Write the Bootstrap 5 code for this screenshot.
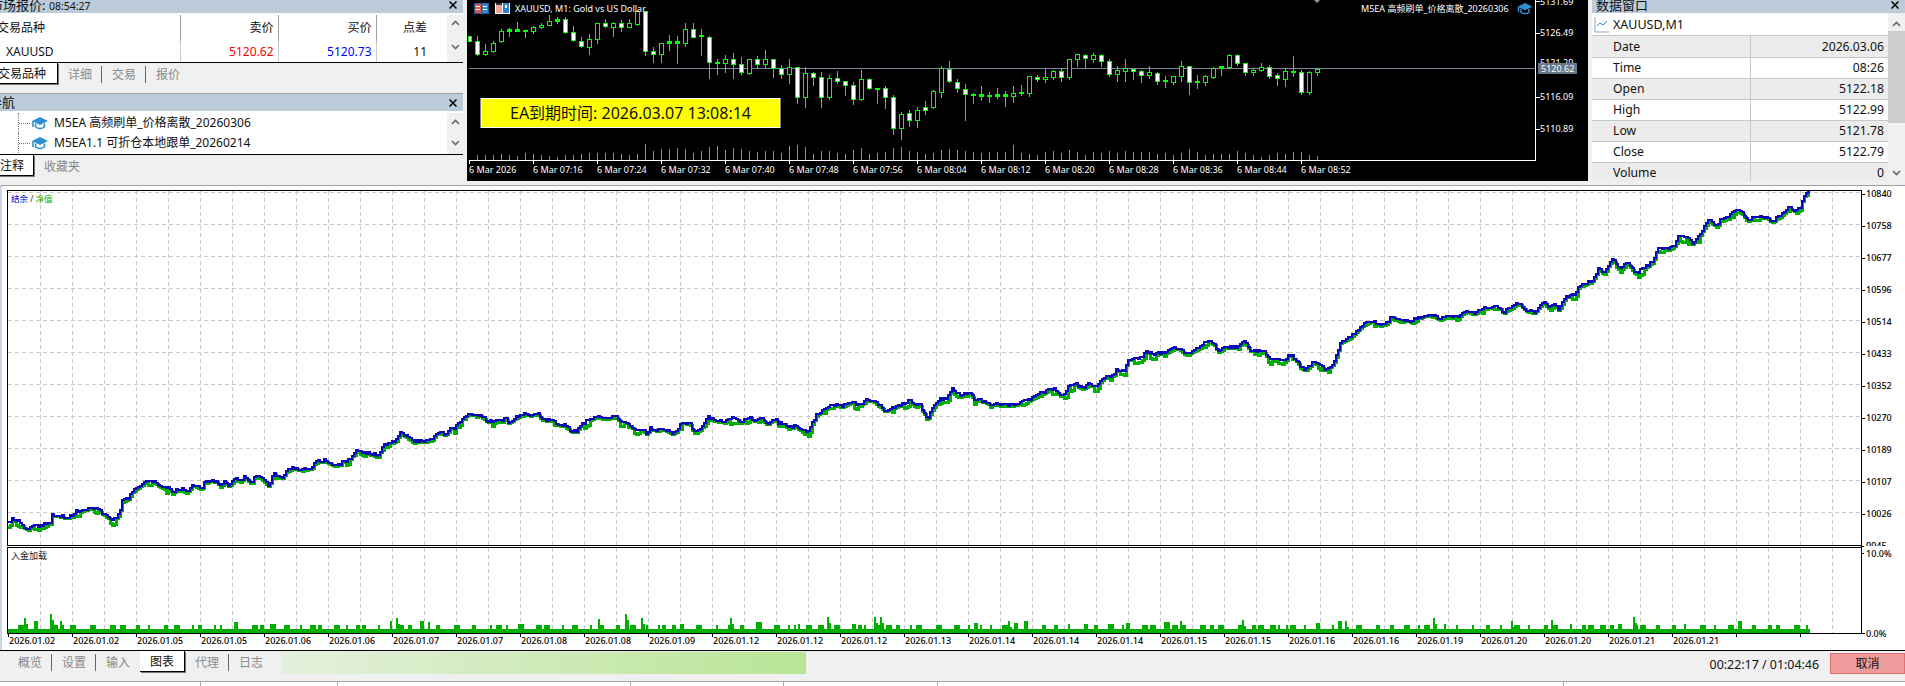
<!DOCTYPE html>
<html lang="zh">
<head>
<meta charset="utf-8">
<title>MT5</title>
<link href="https://cdn.jsdelivr.net/npm/bootstrap@5.3.0/dist/css/bootstrap.min.css" rel="stylesheet">
<style>
html,body{height:686px;overflow:hidden;background:#f0f0f0}
body{font-family:"Noto Sans","Noto Sans CJK SC",sans-serif;font-size:12px;color:#111;width:1905px}
.top-row{height:185px}
.left-pane{width:463px;overflow:hidden}
.chart-pane{width:1121px;height:181px;margin:0 4px}
.chart-pane svg,.tester svg{display:block}
.data-pane{width:313px;overflow:hidden;height:181px}
.titlebar{height:13px;background:#bccbda;font-size:13px;line-height:10px;overflow:hidden;position:relative}
.titlebar.tall{height:17px;line-height:17px}
.titlebar .clip-left{margin-left:-10px;white-space:nowrap}
.titlebar.tall .clip-left{margin-left:-11px}
.titlebar .tm{font-size:10.5px}
.closer{position:absolute;right:6px;top:1px}
.titlebar.tall .closer{top:5px}
.data-title{padding-left:4px}
.data-title .closer{right:6px}
.watch{height:49px;background:#fff;padding-top:2px}
.tree{height:43px;background:#fff;padding-top:2px}
.scroll-col{width:16px;padding:5px 0 4px;background:#f0f0f0}
.scroll-col.nav-scroll{padding:6px 0 4px}
.table.mt-watch{table-layout:fixed;margin:0;width:431px;border-collapse:collapse;font-size:12px;vertical-align:middle}
.table.mt-watch th,.table.mt-watch td{padding:0 4px 0 0;border:0;border-right:1px solid #ccc;border-bottom:0;text-align:right;vertical-align:middle;font-weight:400;color:#111;background:#fff;white-space:nowrap;overflow:hidden}
.table.mt-watch th{height:25px;border-right-color:#a0a0a0}
.table.mt-watch td{height:20px}
.table.mt-watch .namecell{text-align:left;padding-left:0}
.table.mt-watch .sym{padding-left:6px}
.clip-head{margin-left:-3px;display:block}
.col-sell{color:#ff0000!important}
.col-buy{color:#0000ff!important}
.tabstrip{background:#f0f0f0;border-top:1px solid #000;height:31px;flex-wrap:nowrap}
.tabstrip.low{height:30px}
.mt-tab.nav-link{margin-top:3px;height:17px;line-height:17px;padding:0 10px;color:#8a8a8a;font-size:12px;white-space:nowrap}
.mt-tab.nav-link.sep{border-right:1px solid #666;padding-right:9px}
.mt-tab.nav-link.active{margin-top:0;height:21px;line-height:21px;background:#fff;color:#111;border-right:1px solid #000;border-bottom:1px solid #000;box-shadow:1px 1px 0 #777}
.mt-tab.nav-link.cut{margin-left:-12px;padding-right:11px}
.mt-tab.nav-link.cut2{margin-left:-10px;padding-right:9px}
.divider{height:1px;background:#a0a0a0}
.tree-item.list-group-item{padding:0 0 0 18px;border:0;height:20px;background:#fff;font-size:12px;color:#111;white-space:nowrap}
.elbow{width:13px;height:20px;border-left:1px dotted #777;position:relative;flex:none}
.elbow::after{content:"";position:absolute;left:0;right:1px;top:10px;border-top:1px dotted #777}
.capicon{flex:none;margin:0 6px 0 1px}
.table.mt-data{table-layout:fixed;margin:0;width:296px;border-collapse:collapse;font-size:12.2px}
.table.mt-data td{height:21px;padding:0 4px 0 21px;border:0;border-bottom:1px solid #c8c8c8;line-height:19px;vertical-align:middle;color:#111;background:#fff;overflow:hidden}
.table.mt-data tr:nth-child(odd) td{background:#ececec}
.table.mt-data td+td{padding:0 4px 0 0;text-align:right;border-left:1px solid #c8c8c8}
.data-head{height:21px;background:#fff;border-bottom:1px solid #c8c8c8;font-size:12.5px;padding-left:2px;line-height:20px;width:296px}
.data-head svg{margin-right:4px;flex:none}
.data-main{background:#fff;height:168px;overflow:hidden;padding-top:2px}
.data-scroll{width:17px;background:#f0f0f0;height:168px;padding-top:8px;padding-bottom:5px}
.data-thumb{height:92px;background:#cdcdcd;margin:4px 0 auto;width:100%}
.tester{height:465px;background:#fff;border-top:1px solid #a0a0a0;border-left:2px solid #c8d6e6}
.bottom-bar{height:31px;background:#f0f0f0;border-top:1px solid #000;padding-left:3px}
.bottom-bar .nav{padding-left:5px}
.prog-wrap.progress{width:525px;height:22px;margin:1px 0 0 8px;border-radius:0;background:transparent;flex:none}
.prog-fill.progress-bar{background:linear-gradient(90deg,#e4f0dc,#b8e595)}
.elapsed{font-size:12.4px;margin-left:auto;margin-right:11px;margin-top:5px;line-height:17px;white-space:nowrap}
.btn.cancel-btn{width:75px;height:21px;padding:0;margin:2px 0 0;font-size:12px;line-height:18px;background:#ee9b9b;border:1px solid #e26f6f;border-radius:0;color:#111}
.status-row{height:5px;background:#fff;border-top:1px solid #a8a8a8}
.status-cell{border-right:1px solid #a8a8a8;height:4px}
.cv{font-family:"Noto Sans","Noto Sans CJK SC",sans-serif}
.cw{fill:#fff;font-size:9px}
.ck{fill:#000;font-size:9px;font-weight:500}
.cy{fill:#111;font-size:16px}
</style>
</head>
<body>
<svg width="0" height="0" class="position-absolute">
<defs>
<symbol id="cap" viewBox="0 0 16 14"><path fill="#2e8fd0" d="M8 1 16 5 8 9 0 5Z"/><path fill="none" stroke="#2e8fd0" stroke-width="1.6" d="M3.6 7.5V11c2.4 2 6.4 2 8.8 0V7.5M1 5v6"/></symbol>
<symbol id="x" viewBox="0 0 8 8"><path d="M.5.5l7 7M7.5.5l-7 7" stroke="#000" stroke-width="1.5" fill="none"/></symbol>
<symbol id="up" viewBox="0 0 9 6"><path d="M1 5l3.5-3.5L8 5" stroke="#666" stroke-width="1.6" fill="none"/></symbol>
<symbol id="dn" viewBox="0 0 9 6"><path d="M1 1l3.5 3.5L8 1" stroke="#666" stroke-width="1.6" fill="none"/></symbol>
</defs>
</svg>

<div class="top-row d-flex">
  <div class="left-pane">
    <div class="titlebar"><div class="clip-left">市场报价: <span class="tm">08:54:27</span></div><svg class="closer" width="8" height="8"><use href="#x"/></svg></div>
    <div class="watch d-flex">
      <table class="table mt-watch">
        <colgroup><col style="width:180px"><col style="width:98px"><col style="width:98px"><col style="width:55px"></colgroup>
        <tr><th class="namecell"><span class="clip-head">交易品种</span></th><th>卖价</th><th>买价</th><th class="border-0">点差</th></tr>
        <tr><td class="namecell sym">XAUUSD</td><td class="col-sell">5120.62</td><td class="col-buy">5120.73</td><td class="border-0">11</td></tr>
      </table>
      <div class="flex-grow-1 bg-white"></div>
      <div class="scroll-col d-flex flex-column justify-content-between align-items-center"><svg width="9" height="6"><use href="#up"/></svg><svg width="9" height="6" class="mb-2"><use href="#dn"/></svg></div>
    </div>
    <nav class="nav tabstrip">
      <a class="nav-link mt-tab active cut" href="#">交易品种</a>
      <a class="nav-link mt-tab sep" href="#">详细</a>
      <a class="nav-link mt-tab sep" href="#">交易</a>
      <a class="nav-link mt-tab" href="#">报价</a>
    </nav>
    <div class="divider"></div>
    <div class="titlebar tall"><div class="clip-left">导航</div><svg class="closer" width="8" height="8"><use href="#x"/></svg></div>
    <div class="tree d-flex">
      <ul class="list-group list-group-flush flex-grow-1 rounded-0">
        <li class="list-group-item tree-item d-flex align-items-center"><span class="elbow"></span><svg class="capicon" width="16" height="14"><use href="#cap"/></svg>M5EA 高频刷单_价格离散_20260306</li>
        <li class="list-group-item tree-item d-flex align-items-center"><span class="elbow"></span><svg class="capicon" width="16" height="14"><use href="#cap"/></svg>M5EA1.1 可折仓本地跟单_20260214</li>
      </ul>
      <div class="scroll-col nav-scroll d-flex flex-column justify-content-between align-items-center"><svg width="9" height="6"><use href="#up"/></svg><svg width="9" height="6" class="mb-1"><use href="#dn"/></svg></div>
    </div>
    <nav class="nav tabstrip low">
      <a class="nav-link mt-tab active cut2" href="#">注释</a>
      <a class="nav-link mt-tab" href="#">收藏夹</a>
    </nav>
  </div>

  <div class="chart-pane">
    <svg class="cv" width="1121" height="181" viewBox="467 0 1121 181">
      <rect x="467" y="0" width="1121" height="181" fill="#000"/>
      <text class="cw" x="1540" y="66">5121.29</text>
      <g shape-rendering="crispEdges">
        <rect x="469" y="68" width="1066" height="1" fill="#778899"/>
        <g id="vols"></g>
        <g id="candles"></g>
        <rect x="469" y="160" width="1067" height="1" fill="#fff"/>
        <rect x="1535" y="0" width="1" height="161" fill="#fff"/>
        <g id="ticks"></g>
        <rect x="1538" y="63" width="39" height="11" fill="#66778a"/>
        <rect x="474" y="3" width="15" height="11" fill="#1d5f9e"/><rect x="475" y="4" width="6" height="9" fill="#e8503f"/><rect x="482" y="4" width="6" height="9" fill="#2f86cf"/>
        <rect x="476" y="6" width="4" height="1" fill="#fff"/><rect x="476" y="9" width="4" height="1" fill="#fff"/><rect x="483" y="6" width="4" height="1" fill="#fff"/><rect x="483" y="9" width="4" height="1" fill="#fff"/>
        <rect x="495" y="3" width="15" height="11" fill="#fff"/><rect x="496" y="5" width="6" height="8" fill="#f2a79a"/><rect x="496" y="3" width="6" height="2" fill="#333"/><rect x="503" y="3" width="6" height="10" fill="#2f86cf"/><rect x="505" y="5" width="2" height="3" fill="#fff"/>
      </g>
      <path d="M1314 0h6l-3 3z" fill="#8a97a5"/>
      <use href="#cap" x="1517" y="2" width="16" height="13"/>
      <text class="cw" x="515" y="12">XAUUSD, M1:  Gold vs US Dollar</text>
      <text class="cw" x="1361" y="12">M5EA 高频刷单_价格离散_20260306</text>
      <text class="cw" x="1540" y="5">5131.69</text>
      <text class="cw" x="1540" y="36">5126.49</text>
      <text class="cw" x="1541" y="72">5120.62</text>
      <text class="cw" x="1540" y="100">5116.09</text>
      <text class="cw" x="1540" y="132">5110.89</text>
      <text class="cw" x="469" y="173">6 Mar 2026</text>
      <text class="cw" x="533" y="173">6 Mar 07:16</text>
      <text class="cw" x="597" y="173">6 Mar 07:24</text>
      <text class="cw" x="661" y="173">6 Mar 07:32</text>
      <text class="cw" x="725" y="173">6 Mar 07:40</text>
      <text class="cw" x="789" y="173">6 Mar 07:48</text>
      <text class="cw" x="853" y="173">6 Mar 07:56</text>
      <text class="cw" x="917" y="173">6 Mar 08:04</text>
      <text class="cw" x="981" y="173">6 Mar 08:12</text>
      <text class="cw" x="1045" y="173">6 Mar 08:20</text>
      <text class="cw" x="1109" y="173">6 Mar 08:28</text>
      <text class="cw" x="1173" y="173">6 Mar 08:36</text>
      <text class="cw" x="1237" y="173">6 Mar 08:44</text>
      <text class="cw" x="1301" y="173">6 Mar 08:52</text>
      <rect x="481" y="98.5" width="299" height="29" fill="#ff0" stroke="#fff"/>
      <text class="cy" x="630.5" y="119" text-anchor="middle">EA到期时间: 2026.03.07 13:08:14</text>
    </svg>
  </div>

  <div class="data-pane">
    <div class="titlebar data-title">数据窗口<svg class="closer" width="8" height="8"><use href="#x"/></svg></div>
    <div class="d-flex bg-white">
      <div class="data-main">
        <div class="data-head d-flex align-items-center"><svg width="15" height="16" viewBox="0 0 15 16"><path d="M1 .5V15h14" stroke="#9aa5b1" fill="none"/><path d="M3 9l3-3 3 2 4-4" stroke="#2e8fd0" fill="none"/></svg>XAUUSD,M1</div>
        <table class="table mt-data">
          <colgroup><col style="width:158px"><col style="width:138px"></colgroup>
          <tr><td>Date</td><td>2026.03.06</td></tr>
          <tr><td>Time</td><td>08:26</td></tr>
          <tr><td>Open</td><td>5122.18</td></tr>
          <tr><td>High</td><td>5122.99</td></tr>
          <tr><td>Low</td><td>5121.78</td></tr>
          <tr><td>Close</td><td>5122.79</td></tr>
          <tr><td>Volume</td><td>0</td></tr>
        </table>
      </div>
      <div class="data-scroll d-flex flex-column align-items-center"><svg width="9" height="6"><use href="#up"/></svg><div class="data-thumb"></div><svg width="9" height="6"><use href="#dn"/></svg></div>
    </div>
  </div>
</div>

<div class="tester">
  <svg class="cv" width="1903" height="464" viewBox="2 186 1903 464">
    <g shape-rendering="crispEdges">
      <path id="grid" stroke="#c8c8c8" stroke-dasharray="4 3" fill="none"/>
      <path id="gridv" stroke="#c8c8c8" stroke-dasharray="4 3" fill="none"/>
      <path id="eq" stroke="#00b000" stroke-width="3" fill="none"/>
      <path id="bal" stroke="#0a0ab8" stroke-width="2" fill="none"/>
      <g id="bars" fill="#00b000"></g>
      <path id="frame" stroke="#000" fill="none"/>
    </g>
    <text class="ck" x="1866" y="197">10840</text>
    <text class="ck" x="1866" y="229">10758</text>
    <text class="ck" x="1866" y="261">10677</text>
    <text class="ck" x="1866" y="293">10596</text>
    <text class="ck" x="1866" y="325">10514</text>
    <text class="ck" x="1866" y="357">10433</text>
    <text class="ck" x="1866" y="389">10352</text>
    <text class="ck" x="1866" y="421">10270</text>
    <text class="ck" x="1866" y="453">10189</text>
    <text class="ck" x="1866" y="485">10107</text>
    <text class="ck" x="1866" y="517">10026</text>
    <text class="ck" x="1866" y="549">9945</text>
    <rect x="1864" y="546" width="40" height="10" fill="#fff"/>
    <text class="ck" x="1866" y="557">10.0%</text>
    <text class="ck" x="1866" y="637">0.0%</text>
    <text x="11" y="202" font-size="8.5"><tspan fill="#0000c8">结余</tspan><tspan fill="#333"> / </tspan><tspan fill="#00b000">净值</tspan></text>
    <text x="11" y="559" font-size="9" fill="#222">入金加载</text>
    <text class="ck" x="9" y="644">2026.01.02</text>
    <text class="ck" x="73" y="644">2026.01.02</text>
    <text class="ck" x="137" y="644">2026.01.05</text>
    <text class="ck" x="201" y="644">2026.01.05</text>
    <text class="ck" x="265" y="644">2026.01.06</text>
    <text class="ck" x="329" y="644">2026.01.06</text>
    <text class="ck" x="393" y="644">2026.01.07</text>
    <text class="ck" x="457" y="644">2026.01.07</text>
    <text class="ck" x="521" y="644">2026.01.08</text>
    <text class="ck" x="585" y="644">2026.01.08</text>
    <text class="ck" x="649" y="644">2026.01.09</text>
    <text class="ck" x="713" y="644">2026.01.12</text>
    <text class="ck" x="777" y="644">2026.01.12</text>
    <text class="ck" x="841" y="644">2026.01.12</text>
    <text class="ck" x="905" y="644">2026.01.13</text>
    <text class="ck" x="969" y="644">2026.01.14</text>
    <text class="ck" x="1033" y="644">2026.01.14</text>
    <text class="ck" x="1097" y="644">2026.01.14</text>
    <text class="ck" x="1161" y="644">2026.01.15</text>
    <text class="ck" x="1225" y="644">2026.01.15</text>
    <text class="ck" x="1289" y="644">2026.01.16</text>
    <text class="ck" x="1353" y="644">2026.01.16</text>
    <text class="ck" x="1417" y="644">2026.01.19</text>
    <text class="ck" x="1481" y="644">2026.01.20</text>
    <text class="ck" x="1545" y="644">2026.01.20</text>
    <text class="ck" x="1609" y="644">2026.01.21</text>
    <text class="ck" x="1673" y="644">2026.01.21</text>
  </svg>
</div>

<div class="bottom-bar d-flex">
  <nav class="nav flex-nowrap flex-shrink-0">
    <a class="nav-link mt-tab sep" href="#">概览</a>
    <a class="nav-link mt-tab sep" href="#">设置</a>
    <a class="nav-link mt-tab" href="#">输入</a>
    <a class="nav-link mt-tab active" href="#">图表</a>
    <a class="nav-link mt-tab sep" href="#">代理</a>
    <a class="nav-link mt-tab" href="#">日志</a>
  </nav>
  <div class="progress prog-wrap"><div class="progress-bar prog-fill" style="width:100%"></div></div>
  <div class="elapsed">00:22:17 / 01:04:46</div>
  <button class="btn cancel-btn" type="button">取消</button>
</div>
<div class="status-row d-flex">
  <div class="status-cell" style="width:201px"></div>
  <div class="status-cell" style="width:137px"></div>
  <div class="status-cell" style="width:293px"></div>
  <div class="status-cell" style="width:153px"></div>
  <div class="status-cell" style="width:154px"></div>
  <div class="status-cell" style="width:626px"></div>
</div>

<script>
(function(){
var NS="http://www.w3.org/2000/svg";
function R(p,x,y,w,h,f){var r=document.createElementNS(NS,"rect");r.setAttribute("x",x);r.setAttribute("y",y);r.setAttribute("width",w);r.setAttribute("height",h);if(f)r.setAttribute("fill",f);p.appendChild(r);}
var seed=12345;function rnd(){seed=(seed*1664525+1013904223)>>>0;return seed/4294967296;}

var A=[[28,108,124,108,124,'w'],[52,108,165,124,163,'w'],[76,133,165,152,163,'h'],[100,122,155,128,152,'h'],[124,88,125,92,124,'h'],[148,85,107,88,92,'f'],[172,67,92,88,92,'f'],[196,90,110,90,92,'f'],[220,78,100,82,92,'h'],[244,68,83,74,82,'h'],[268,45,75,62,74,'h'],[292,52,68,57,62,'f'],[316,52,98,58,95,'w'],[340,78,122,95,120,'w'],[364,112,142,124,139,'w'],[388,103,162,118,140,'h'],[412,68,128,70,118,'h'],[436,58,82,70,79,'w'],[460,65,108,70,80,'h'],[484,60,92,70,80,'w'],[508,58,82,70,80,'h'],[532,30,75,32,72,'h'],[556,32,165,32,152,'w'],[580,142,186,152,163,'w'],[604,130,186,130,163,'h'],[628,105,150,124,128,'f'],[652,108,188,124,128,'f'],[676,68,138,88,128,'h'],[700,68,112,88,110,'w'],[724,88,165,106,108,'f'],[748,108,233,110,187,'w'],[772,178,222,186,188,'f'],[796,165,216,178,188,'h'],[820,158,233,178,193,'w'],[844,170,222,193,217,'w'],[868,178,222,178,218,'h'],[892,168,205,178,193,'w'],[916,150,205,178,193,'h'],[940,178,230,178,205,'w'],[964,195,233,205,222,'w'],[988,178,250,200,223,'h'],[1012,200,308,200,290,'w'],[1036,200,320,220,290,'h'],[1060,215,255,220,232,'w'],[1084,216,320,232,292,'w'],[1108,225,298,235,292,'h'],[1132,212,250,235,244,'w'],[1156,242,285,244,256,'w'],[1180,246,312,256,298,'w'],[1204,210,300,238,298,'h'],[1228,235,268,238,265,'w'],[1252,264,308,265,267,'f'],[1276,258,323,265,290,'w'],[1300,286,402,290,385,'w'],[1324,335,416,343,385,'h'],[1348,330,378,340,360,'w'],[1372,322,380,330,360,'h'],[1396,303,342,322,330,'w'],[1420,270,325,273,322,'h'],[1444,198,290,205,275,'h']];
var B=[[28,183,245,208,243,'w'],[52,238,275,245,265,'w'],[76,252,360,266,283,'w'],[100,278,308,283,285,'f'],[124,258,300,283,287,'f'],[148,276,305,285,287,'f'],[172,264,295,283,287,'f'],[196,273,318,283,287,'f'],[220,258,305,278,287,'h'],[244,255,285,277,279,'f'],[268,228,288,229,278,'h'],[292,225,242,230,238,'w'],[316,205,246,230,238,'h'],[340,210,236,214,230,'h'],[364,205,243,214,230,'w'],[388,178,236,178,231,'h'],[412,162,198,163,178,'h'],[436,162,202,164,175,'w'],[460,158,186,166,176,'h'],[484,162,198,166,182,'w'],[508,178,228,182,223,'w'],[532,198,243,210,223,'h'],[556,178,243,205,212,'h'],[580,205,236,206,214,'w'],[604,210,246,214,226,'w'],[628,198,233,217,226,'h'],[652,216,252,218,242,'w'],[676,228,260,241,244,'f'],[700,228,252,229,245,'h'],[724,183,243,198,229,'h'],[748,198,282,199,247,'w'],[772,226,264,244,247,'f'],[796,226,255,229,245,'h'],[820,200,234,203,230,'h'],[844,198,225,199,203,'f'],[868,163,204,165,200,'h'],[892,163,196,166,190,'w'],[916,188,224,190,217,'w'],[940,206,224,211,217,'h'],[964,189,214,202,211,'h'],[988,196,233,202,227,'w'],[1012,220,255,226,235,'w'],[1036,206,258,213,238,'h'],[1060,168,228,213,217,'f'],[1084,210,282,217,275,'w'],[1108,213,282,217,275,'h'],[1132,205,224,206,217,'h']];
var g=document.getElementById("candles"),L="#00ff00";
function candle(c,x0){var x=Math.floor(x0+c[0]/3);
 var wt=Math.round(c[1]/3),wb=Math.round(c[2]/3),bt=Math.round(c[3]/3),bb=Math.round(c[4]/3);
 R(g,x,wt,1,wb-wt+1,L);
 if(x-2<469&&x0==460){R(g,x-1,bt,4,bb-bt+1,L);R(g,x,bt+1,2,Math.max(bb-bt-1,0),"#fff");return;}
 R(g,x-2,bt,5,Math.max(bb-bt,1)+1,L);
 if(c[5]!='f'&&bb-bt>=2)R(g,x-1,bt+1,3,bb-bt-1,c[5]=='w'?"#fff":"#000");
}
A.forEach(function(c){candle(c,460)});B.forEach(function(c){candle(c,940)});

var VA=[52,464,76,464,100,464,124,462,148,465,172,468,196,460,220,462,244,465,268,467,292,470,316,465,340,465,364,462,388,458,412,460,436,458,460,460,484,462,508,465,532,462,556,432,580,452,604,448,628,446,652,444,676,448,700,458,724,454,748,440,772,438,796,450,820,445,844,447,868,454,892,456,916,452,940,452,964,460,988,438,1012,436,1036,440,1060,462,1084,454,1108,452,1132,460,1156,462,1180,450,1204,445,1228,462,1252,458,1276,455,1300,444,1324,442,1348,452,1372,456,1396,462,1420,460];
var VB=[4,450,28,447,52,450,76,453,100,457,124,460,148,456,172,456,196,456,220,435,244,460,268,462,292,465,316,456,340,453,364,459,388,450,412,456,436,464,460,456,484,459,508,453,532,459,556,453,580,456,604,456,628,456,652,462,676,459,700,465,724,459,748,447,772,456,796,465,820,462,844,462,868,462,892,453,916,459,940,465,964,471,988,465,1012,459,1036,462,1060,456,1084,456,1108,465,1132,468];
var v=document.getElementById("vols");
function vols(a,x0){for(var i=0;i<a.length;i+=2){var t=Math.round(a[i+1]/3);R(v,Math.floor(x0+a[i]/3),t,1,160-t,"#32cd32");}}
vols(VA,460);vols(VB,940);

var tk=document.getElementById("ticks");
for(var x=469;x<=1301;x+=64)R(tk,x,160,1,4,"#fff");
[1,33,97,129].forEach(function(y){R(tk,1535,y,5,1,"#fff")});

var d="";for(var y=192;y<=512;y+=32)d+="M8 "+(y+.5)+"H1861";
document.getElementById("grid").setAttribute("d",d);
var dv="";for(var x2=40;x2<=1832;x2+=32)dv+="M"+(x2+.5)+" 191V545M"+(x2+.5)+" 548V633";
document.getElementById("gridv").setAttribute("d",dv);
var f="M7.5 190.5H1861.5V545.5H7.5ZM7.5 547.5H1861.5V633.5H7.5Z";
for(var x3=8;x3<=1860;x3+=64)f+="M"+(x3+.5)+" 633V637";
for(var y2=194;y2<=546;y2+=32)f+="M1861 "+(y2+.5)+"H1865";
f+="M1861 553.5H1865M1861 633.5H1865";
document.getElementById("frame").setAttribute("d",f);

var segs=[
[0,410,[22,340,35,328,55,332,70,348,82,357,100,346,115,352,135,340,150,338,156,316,175,316,195,322,215,318,228,302,240,304,250,298,275,293,295,298,310,312,338,330,358,310,363,275,385,262,395,245,415,230,435,213,460,213,475,225,490,235,500,232,515,245,545,236,558,246,578,224,605,235,610,217,630,211,648,212,660,228,672,214,685,226,705,207,720,212,735,200,755,220,762,202,780,200,805,225,822,190,825,202,850,200,855,183,885,172,905,180,935,172,945,155,975,150,1005,165,1022,160,1028,150,1040,155,1070,118,1090,128,1135,135,1145,110,1160,100,1190,90,1197,70,1210,72,1240,95,1295,90,1310,66,1335,72,1350,55,1365,52,1390,20,1410,10,1437,15]],
[480,370,[0,135,15,148,40,158,55,150,65,155,75,142,85,158,105,142,140,128,150,135,175,128,185,148,220,150,230,162,250,165,275,182,290,182,300,165,345,138,375,145,405,138,420,155,440,155,465,182,490,180,500,190,510,175,530,180,550,175,575,190,590,182,605,155,630,162,640,185,660,178,685,140,700,150,735,155,760,143,780,155,810,140,820,152,838,140,860,160,885,145,895,160,910,158,925,175,945,165,965,183,985,183,1010,130,1025,125,1050,105,1085,107,1110,95,1140,105,1160,88,1180,92,1215,122,1290,92,1305,108,1320,105,1340,147,1355,120,1375,88,1400,85,1415,57,1437,75]],
[960,280,[0,347,28,337,40,355,75,365,90,372,150,375,175,370,215,355,240,340,280,325,300,345,318,335,322,320,345,310,365,325,385,312,405,320,430,292,460,285,468,268,495,272,500,237,540,235,560,215,580,222,620,215,650,202,680,220,715,205,740,180,760,190,775,215,795,200,830,200,852,185,870,210,910,215,930,238,975,243,985,222,1005,235,1020,260,1035,270,1055,248,1070,247,1090,266,1105,265,1125,240,1140,185,1165,175,1205,135,1235,122,1260,135,1280,128,1295,108,1320,122]],
[1400,186,[0,405,20,400,30,405,75,385,110,392,120,400,135,390,165,395,200,373,220,382,255,365,295,362,310,378,355,350,375,370,400,380,430,345,445,365,465,352,475,372,495,332,525,325,535,300,575,285,595,247,610,262,635,218,660,248,680,228,708,262,760,225,770,187,800,190,820,180,835,150,860,155,875,172,890,160,925,102,950,120,960,103,985,95,1005,68,1030,85,1040,103,1060,93,1100,93,1115,105,1140,90,1165,62,1185,73,1200,62,1210,30,1228,15]]
];
var P=[];segs.forEach(function(s){for(var i=0;i<s[2].length;i+=2)P.push([s[0]+s[2][i]/3,s[1]+s[2][i+1]/3]);});
function at(x){for(var i=1;i<P.length;i++){if(x<=P[i][0]){var a=P[i-1],b=P[i];return a[1]+(b[1]-a[1])*(x-a[0])/Math.max(b[0]-a[0],.01);}}return P[P.length-1][1];}
var db="",de="",dipLeft=0,dipVal=0;
for(var x4=8;x4<=1809;x4+=2){
 var y0=at(x4),j=Math.round((rnd()-.5)*3),yb=Math.round(y0+j);
 if(dipLeft<=0&&rnd()<.12){dipLeft=1+Math.floor(rnd()*3);dipVal=1+Math.round(rnd()*3);}
 var dip=dipLeft>0?dipVal:0;dipLeft--;
 db+=(db?"L":"M")+x4+" "+yb+"H"+(x4+2);
 de+=(de?"L":"M")+x4+" "+(Math.round(y0)+1.5+dip)+"H"+(x4+2);
}
document.getElementById("bal").setAttribute("d",db);
document.getElementById("eq").setAttribute("d",de);

var peaks={24:618,50:614,60:621,396:618,598:619,625:614,641:618,730:618,880:617,827:617,874:617,1433:618,1633:617,1345:621,1180:621,1008:621,1242:620,1511:621,1551:620};
var bars=document.getElementById("bars");
R(bars,8,629,1802,4);
var xb=8;
while(xb<1804){
 var gap=2*(1+Math.floor(rnd()*7)),wid=2*(1+Math.floor(rnd()*3));
 xb+=gap;if(xb+wid>1810)break;
 var hb=rnd()<.82?4:5+Math.floor(rnd()*4);
 R(bars,xb,629-hb,wid,hb);
 xb+=wid;
}
for(var k in peaks){R(bars,+k,peaks[k],2,629-peaks[k]);R(bars,+k+2,peaks[k]+6,2,629-peaks[k]-6);}
})();
</script>
</body>
</html>
